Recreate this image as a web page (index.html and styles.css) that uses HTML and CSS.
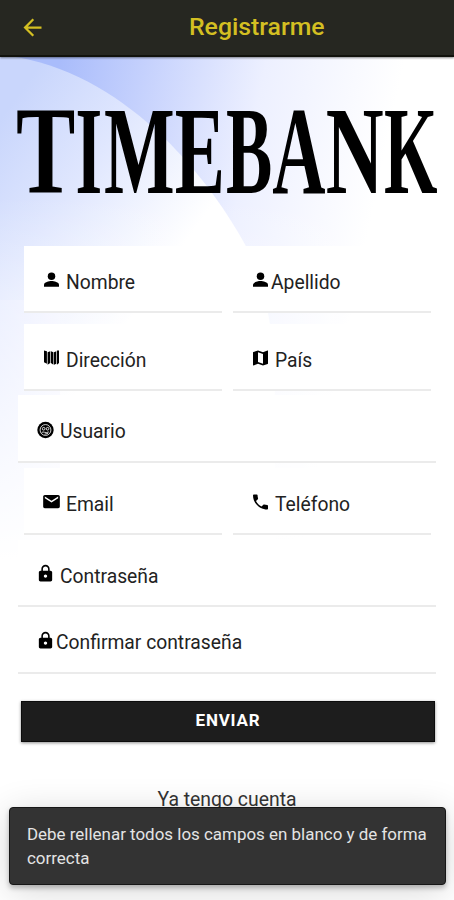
FILE: index.html
```
<!DOCTYPE html>
<html lang="es">
<head>
<meta charset="utf-8">
<title>Registrarme</title>
<link rel="stylesheet" href="styles.css">
</head>
<body>
<div class="screen">
  <svg class="backdrop" viewBox="0 0 454 900" aria-hidden="true">
    <defs>
      <linearGradient id="sky" gradientUnits="userSpaceOnUse" x1="60" y1="60" x2="390" y2="130">
        <stop offset="0" stop-color="#a9bcfb"/><stop offset=".25" stop-color="#c5d1fd"/><stop offset=".6" stop-color="#edf0ff"/><stop offset="1" stop-color="#ffffff"/>
      </linearGradient>
      <linearGradient id="disc" gradientUnits="userSpaceOnUse" x1="0" y1="120" x2="180" y2="250">
        <stop offset="0" stop-color="#c9d6fc"/><stop offset=".45" stop-color="#e0e7fe"/><stop offset="1" stop-color="#ffffff"/>
      </linearGradient>
      <linearGradient id="low" gradientUnits="userSpaceOnUse" x1="0" y1="0" x2="60" y2="0">
        <stop offset="0" stop-color="#e6ebff"/><stop offset="1" stop-color="#f3f4ff"/>
      </linearGradient>
      <linearGradient id="fade" x1="0" y1="0" x2="0" y2="1">
        <stop offset=".35" stop-color="#fff" stop-opacity="0"/><stop offset="1" stop-color="#fff"/>
      </linearGradient>
    </defs>
    <rect width="454" height="560" fill="url(#sky)"/>
    <path d="M0 55C110 65 200 160 248 250C270 295 275 350 275 400V560H0z" fill="url(#disc)"/>
    <rect y="300" width="60" height="260" fill="url(#low)"/>
    <rect width="454" height="560" fill="url(#fade)"/>
  </svg>

  <header class="appbar">
    <svg class="back" viewBox="0 0 24 24"><path d="M20 11H7.830l5.590-5.590L12 4l-8 8 8 8 1.410-1.410L7.830 13H20z"/></svg>
    <h1>Registrarme</h1>
  </header>

  <main>
    <svg class="logo" viewBox="0 0 454 110" role="img" aria-label="TIMEBANK">
      <text y="97"><tspan x="16" textLength="59.400" lengthAdjust="spacingAndGlyphs">T</tspan><tspan x="75.600" textLength="26.700" lengthAdjust="spacingAndGlyphs">I</tspan><tspan x="104" textLength="70.600" lengthAdjust="spacingAndGlyphs">M</tspan><tspan x="174.800" textLength="50.200" lengthAdjust="spacingAndGlyphs">E</tspan><tspan x="225.900" textLength="46.300" lengthAdjust="spacingAndGlyphs">B</tspan><tspan x="272.300" textLength="53.300" lengthAdjust="spacingAndGlyphs">A</tspan><tspan x="325.700" textLength="57.900" lengthAdjust="spacingAndGlyphs">N</tspan><tspan x="383.900" textLength="53.500" lengthAdjust="spacingAndGlyphs">K</tspan></text>
    </svg>

    <form class="form">
      <div class="row split names">
        <label class="field"><svg viewBox="0 0 24 24"><circle cx="12" cy="7.500" r="4.500"/><path d="M3 20v-2.200c0-3 6-4.500 9-4.500s9 1.500 9 4.500V20z"/></svg><span>Nombre</span></label>
        <label class="field tight"><svg viewBox="0 0 24 24"><circle cx="12" cy="7.500" r="4.500"/><path d="M3 20v-2.200c0-3 6-4.500 9-4.500s9 1.500 9 4.500V20z"/></svg><span>Apellido</span></label>
      </div>
      <div class="row split address">
        <label class="field"><svg viewBox="0 0 24 24"><path d="M3 3l3.500 1v15L3 17zM7.300 5l3.200-1v14l-3.200 2zM11.300 4l3 1v15l-3-2zM15 5l2.700-1v15L15 20zM18.500 3H21v15l-2.500 2z"/></svg><span>Dirección</span></label>
        <label class="field"><svg viewBox="0 0 24 24"><path fill-rule="evenodd" d="M20.500 3l-.16.030L15 5.100 9 3 3.360 4.900c-.21.070-.36.250-.36.480V20.500c0 .28.220.5.500.5l.16-.03L9 18.900l6 2.100 5.640-1.900c.21-.07.360-.25.360-.48V3.500c0-.28-.22-.5-.5-.5zM15 19l-6-2.110V5l6 2.110V19z"/></svg><span>País</span></label>
      </div>
      <div class="row user">
        <label class="field"><svg viewBox="0 0 24 24"><circle cx="12" cy="12" r="9.800"/><g fill="none" stroke="#fff" stroke-width="1"><circle cx="12" cy="12" r="6.500"/><circle cx="9.800" cy="10.500" r="1.600"/><circle cx="14.500" cy="10.500" r="1.600"/><path d="M7.500 15c2-2 4 1.500 8.500-.7M11 17l4-1"/></g></svg><span>Usuario</span></label>
      </div>
      <div class="row split contact">
        <label class="field"><svg viewBox="0 0 24 24"><path d="M20 3.500H4c-1.100 0-2 .9-2 2v12c0 1.100.9 2 2 2h16c1.100 0 2-.9 2-2v-12c0-1.100-.9-2-2-2zm0 4l-8 5-8-5v-2l8 5 8-5v2z"/></svg><span>Email</span></label>
        <label class="field"><svg viewBox="0 0 24 24"><path d="M6.620 10.790c1.440 2.830 3.760 5.140 6.590 6.590l2.200-2.200c.27-.27.670-.36 1.020-.24 1.120.37 2.330.57 3.570.57.550 0 1 .45 1 1V20c0 .55-.45 1-1 1-9.390 0-17-7.610-17-17 0-.55.450-1 1-1h3.500c.55 0 1 .45 1 1 0 1.250.2 2.450.57 3.570.11.350.030.740-.25 1.020l-2.200 2.200z"/></svg><span>Teléfono</span></label>
      </div>
      <div class="row pass">
        <label class="field"><svg viewBox="0 0 24 24"><path fill-rule="evenodd" d="M18 8h-1V6c0-2.760-2.240-5-5-5S7 3.240 7 6v2H6c-1.100 0-2 .9-2 2v9c0 1.100.9 2 2 2h12c1.100 0 2-.9 2-2v-9c0-1.100-.9-2-2-2zm-6 8.500c-1.100 0-2-.9-2-2s.9-2 2-2 2 .9 2 2-.9 2-2 2zm3.100-8.500H8.900V6c0-1.710 1.390-3.100 3.100-3.100s3.100 1.390 3.100 3.100v2z"/></svg><span>Contraseña</span></label>
      </div>
      <div class="row confirm">
        <label class="field tight"><svg viewBox="0 0 24 24"><path fill-rule="evenodd" d="M18 8h-1V6c0-2.760-2.240-5-5-5S7 3.240 7 6v2H6c-1.100 0-2 .9-2 2v9c0 1.100.9 2 2 2h12c1.100 0 2-.9 2-2v-9c0-1.100-.9-2-2-2zm-6 8.500c-1.100 0-2-.9-2-2s.9-2 2-2 2 .9 2 2-.9 2-2 2zm3.100-8.500H8.900V6c0-1.710 1.390-3.100 3.100-3.100s3.100 1.390 3.100 3.100v2z"/></svg><span>Confirmar contraseña</span></label>
      </div>
      <button class="submit" type="button">ENVIAR</button>
      <a class="login">Ya tengo cuenta</a>
    </form>
  </main>

  <div class="toast" role="alert">Debe rellenar todos los campos en blanco y de forma correcta</div>
</div>
</body>
</html>
```
FILE: styles.css
```
* { box-sizing: border-box; }

body {
  margin: 0;
  font-family: Roboto, "Liberation Sans", sans-serif;
  color: #222;
}

.screen {
  position: relative;
  width: 454px;
  height: 900px;
  overflow: hidden;
  background: #fff;
}

.backdrop {
  position: absolute;
  inset: 0;
}

.appbar {
  position: relative;
  height: 57px;
  display: grid;
  grid-template-columns: 60px 1fr 0;
  align-items: center;
  padding: 0 0 1px 19px;
  background: #262721;
  border-bottom: 2px solid #11120c;
  box-shadow: 0 1px 2px rgba(0, 0, 0, .45);
}

.back { width: 27px; height: 27px; fill: #d3bf22; }

.appbar h1 {
  margin: 0 0 0 110px;
  font-size: 24.8px;
  line-height: 30px;
  font-weight: 500;
  color: #d3bf22;
}

main { position: relative; }

.logo {
  display: block;
  width: 454px;
  height: 110px;
  margin-top: 39px;
}

.logo text {
  font: bold 124px "Liberation Serif", serif;
  fill: #000;
}

.form {
  display: flex;
  flex-direction: column;
  padding: 0 18px;
  margin-top: 40px;
}

.row {
  display: grid;
  height: 67px;
}

.split {
  grid-template-columns: 198px 198px;
  column-gap: 11px;
  padding-left: 6px;
}

.address { margin-top: 11px; }
.user { margin-top: 4px; height: 68px; }
.contact { margin-top: 5px; }
.pass { margin-top: 5px; }

.field {
  display: flex;
  align-items: center;
  gap: 4px;
  padding: 8px 0 0 17px;
  background: #fff;
  border-bottom: 2px solid #ebebeb;
  font-size: 19.3px;
  line-height: 24px;
}

.field svg {
  width: 21px;
  height: 20px;
  margin-top: -5px;
  flex: none;
  fill: #000;
}

.tight { gap: 0; }
.confirm .field { padding-top: 7px; }

.submit {
  height: 41px;
  margin: 27px 1px 0 3px;
  padding: 0 0 3px;
  border: 1px solid #0c0c0c;
  background: #1d1d1d;
  box-shadow: 0 1px 3px rgba(0, 0, 0, .45);
  color: #fff;
  font: 700 17px/34px Roboto, sans-serif;
  letter-spacing: .8px;
}

.login {
  margin-top: 45px;
  text-align: center;
  font-size: 19.4px;
  line-height: 26px;
  color: #333;
}

.toast {
  position: absolute;
  left: 9px;
  top: 807px;
  width: 437px;
  height: 78px;
  padding: 14px 16px 14px 17px;
  border: 1px solid #171717;
  border-radius: 4px;
  background: #333;
  box-shadow: 0 3px 5px rgba(0, 0, 0, .25), 0 6px 36px rgba(0, 0, 0, .16);
  color: #e4e4e4;
  font-size: 16.95px;
  line-height: 24px;
}
```
